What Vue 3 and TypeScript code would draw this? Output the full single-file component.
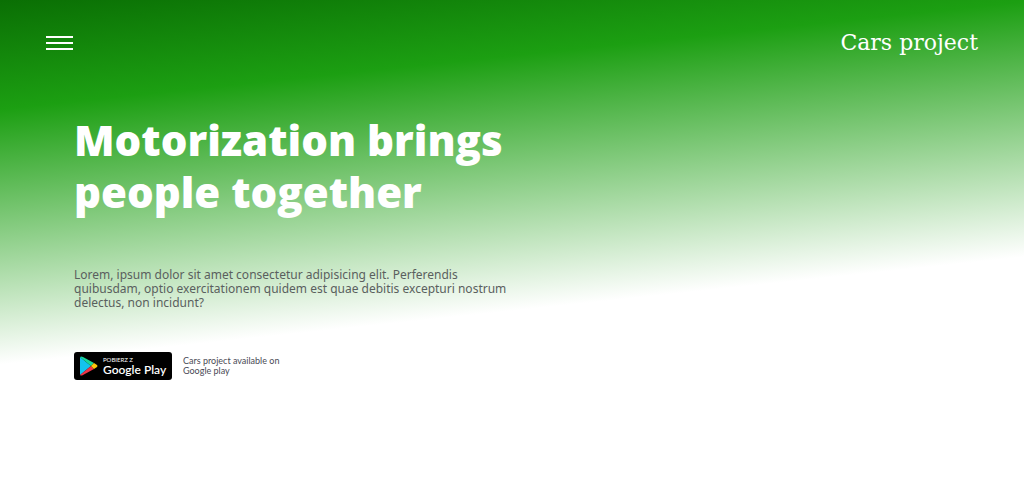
<script setup lang="ts">
const brand: string = 'Cars project'
const intro: string =
  'Lorem, ipsum dolor sit amet consectetur adipisicing elit. Perferendis quibusdam, optio exercitationem quidem est quae debitis excepturi nostrum delectus, non incidunt?'
</script>

<template>
  <div class="page">
    <header class="bar">
      <button class="menu" type="button" aria-label="Menu">
        <span class="line"></span>
        <span class="line"></span>
        <span class="line"></span>
      </button>
      <a class="brand" href="#">{{ brand }}</a>
    </header>

    <main class="hero">
      <h1 class="title">Motorization brings people together</h1>
      <p class="intro">{{ intro }}</p>
      <div class="store">
        <a class="badge" href="#">
          <svg class="play" viewBox="0 0 18 20" aria-hidden="true">
            <path d="M0 1 L11 10 L0 19 Z" fill="#14c3ee" />
            <path d="M0 1 Q1 0 3 1 L14 7 L11 10 Z" fill="#19d69a" />
            <path d="M0 19 Q1 20 3 19 L14 13 L11 10 Z" fill="#ee3548" />
            <path d="M14 7 L17 9 Q18 10 17 11 L14 13 L11 10 Z" fill="#fdc50b" />
          </svg>
          <span class="badge-text">
            <span class="small">POBIERZ Z</span>
            <span class="name">Google Play</span>
          </span>
        </a>
        <p class="note">Cars project available on Google play</p>
      </div>
    </main>
  </div>
</template>

<style>
body {
  margin: 0;
}
</style>

<style scoped>
.page {
  box-sizing: border-box;
  min-height: 100vh;
  background: linear-gradient(174deg, #0a6f04 0%, #1c9f12 18%, #ffffff 60%);
  font-family: Lato, 'Noto Sans', sans-serif;
}

.bar {
  display: flex;
  align-items: center;
  justify-content: space-between;
  height: 86px;
  padding: 0 46px;
}

.menu {
  display: flex;
  flex-direction: column;
  gap: 4px;
  width: 27px;
  padding: 0;
  border: 0;
  background: none;
  cursor: pointer;
}

.line {
  height: 2px;
  background: #ffffff;
}

.brand {
  color: #ffffff;
  font-family: 'DejaVu Serif', serif;
  font-size: 22px;
  line-height: 32px;
  text-decoration: none;
}

.hero {
  padding: 28px 74px;
}

.title {
  max-width: 480px;
  margin: 0;
  color: #ffffff;
  font-family: 'Open Sans', sans-serif;
  font-size: 42px;
  font-weight: 800;
  line-height: 52px;
}

.intro {
  max-width: 450px;
  margin: 50px 0 0;
  color: #5a5f5e;
  font-family: 'Noto Sans', sans-serif;
  font-size: 12px;
  line-height: 14px;
}

.store {
  display: flex;
  align-items: center;
  gap: 11px;
  margin-top: 42px;
}

.badge {
  display: flex;
  align-items: center;
  gap: 5px;
  box-sizing: border-box;
  width: 98px;
  height: 28px;
  padding: 0 6px;
  border-radius: 3px;
  background: #000000;
  color: #ffffff;
  text-decoration: none;
}

.play {
  flex: none;
  width: 18px;
  height: 20px;
}

.badge-text {
  display: flex;
  flex-direction: column;
  white-space: nowrap;
}

.small {
  font-size: 6px;
  line-height: 7px;
}

.name {
  font-size: 12px;
  font-weight: 600;
  line-height: 14px;
}

.note {
  max-width: 110px;
  margin: 0;
  color: #4a4a55;
  font-size: 9px;
  line-height: 10px;
}
</style>
